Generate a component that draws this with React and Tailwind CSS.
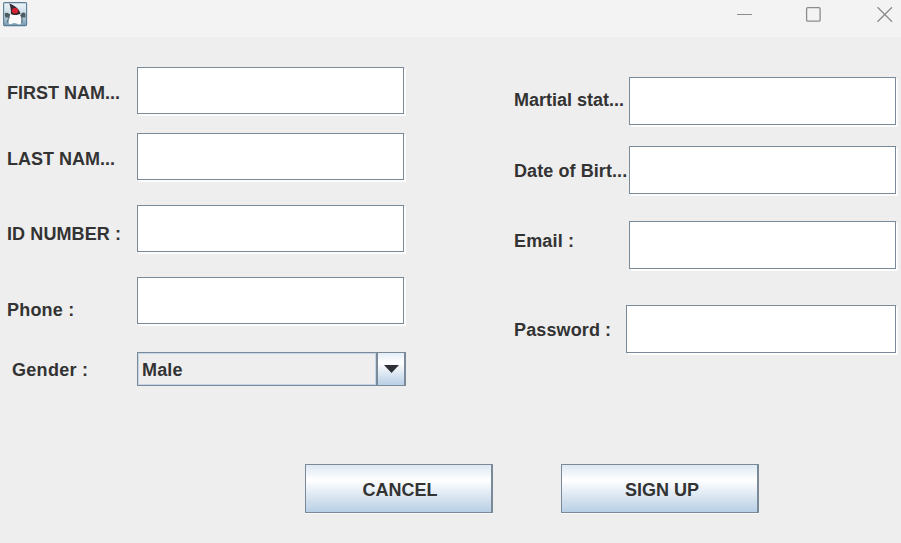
import React from "react";

function DukeIcon() {
  return (
    <svg width="25" height="25" viewBox="0 0 25 25">
      <defs>
        <linearGradient id="sky" x1="0" y1="0" x2="0" y2="1">
          <stop offset="0" stopColor="#edf4f8" />
          <stop offset="0.5" stopColor="#cbdbe5" />
          <stop offset="1" stopColor="#7799b3" />
        </linearGradient>
        <filter id="soft" x="-10%" y="-10%" width="120%" height="120%">
          <feGaussianBlur stdDeviation="0.45" />
        </filter>
      </defs>
      <rect x="0.6" y="0.6" width="23" height="23" rx="1.2" fill="url(#sky)" stroke="#597d92" strokeWidth="1.1" />
      <g filter="url(#soft)">
        <path d="M1.500 12c1-2 3-1.500 5 0l2 0-1 3.500-5 0zM22.500 11.500c-1.500-1.500-3-1-4 0l-1 1 1 3 4 0z" fill="#4c5b64" />
        <path d="M7.500 11.500c-1 3-2.200 8-1.500 10.200 1.500 1.500 3.500-.7 5.500-.7s4 2 6 1.300c1.500-2 .5-7.500-.5-11z" fill="#fbfbfb" />
        <path d="M6.200 1.500C9 2.500 15.500 5 17.500 11.500c-2 1.800-7 2-9.500.5C8 8 7.500 4 6.200 1.500z" fill="#332c30" />
        <ellipse cx="12" cy="8.800" rx="3.100" ry="2.700" fill="#dc2430" />
        <path d="M17.500 13c1.500 2 1.800 5 1.300 8M6.500 15c-1 1.500-2 3.500-2 5.500" fill="none" stroke="#4d5b64" strokeWidth="0.900" />
      </g>
    </svg>
  );
}

function TitleBar() {
  return (
    <header className="flex h-[37px] items-start justify-between bg-[#f3f3f3]">
      <div className="pt-[2px] pl-[3px]">
        <DukeIcon />
      </div>
      <div className="flex pt-[7px] pr-[8px] text-[#8c8c8c]">
        <svg width="16" height="16" viewBox="0 0 16 16" fill="none" stroke="currentColor" className="mr-[52px]">
          <path d="M0 7.500h15" />
        </svg>
        <svg width="16" height="16" viewBox="0 0 16 16" fill="none" stroke="currentColor" strokeWidth="1.300" className="mr-[56px]">
          <rect x="1.600" y="0.700" width="13.500" height="13.500" rx="1" />
        </svg>
        <svg width="16" height="16" viewBox="0 0 16 16" fill="none" stroke="currentColor" strokeWidth="1.300">
          <path d="M0.500 0.200l14.500 14.500M15 0.200l-14.500 14.500" />
        </svg>
      </div>
    </header>
  );
}

// Sunken Swing text field: grey frame with a white highlight below and to the right.
function TextField({ className }) {
  return (
    <div className={`shrink-0 border-r-[3px] border-b-2 border-transparent ${className}`}>
      <input
        type="text"
        className="block h-full w-full border border-[#7a8a99] bg-white shadow-[2px_2px_0_#fcfcfc] outline-none"
      />
    </div>
  );
}

function Row({ label, rowClass, labelClass, children }) {
  return (
    <div className={`flex items-start ${rowClass}`}>
      <label className={`shrink-0 leading-5 whitespace-nowrap ${labelClass}`}>{label}</label>
      {children}
    </div>
  );
}

function GenderSelect() {
  return (
    <div className="flex h-[34px] w-[269px] border border-[#7a8a99]">
      <div className="flex-1 border border-[#c3d5e6] pt-[6px] pl-[3px] leading-5 tracking-[0.15px]">Male</div>
      <div className="flex w-[29px] items-center justify-center border-r border-l-2 border-[#7a8a99] bg-linear-to-b from-[#e3edf6] via-white via-30% to-[#b8cfe5]">
        <svg width="15" height="8" viewBox="0 0 15 8" fill="#2c3034">
          <path d="M0 0h15L7.500 8z" />
        </svg>
      </div>
    </div>
  );
}

function Button({ children, className }) {
  return (
    <button
      className={`h-[49px] border border-r-2 border-[#7a8a99] bg-linear-to-b from-[#dde8f3] via-white via-32% to-[#b8cfe5] pt-[2px] leading-5 shadow-[0_1px_0_#f8f8f8] ${className}`}
    >
      {children}
    </button>
  );
}

export default function App() {
  return (
    <div className="flex h-[543px] w-[901px] flex-col overflow-hidden bg-[#eeeeee] font-['Liberation_Sans',Arial,sans-serif] text-[18px] font-bold text-[#333333]">
      <TitleBar />
      <main className="flex h-[427px] shrink-0">
        <section className="w-[507px] pt-[30px]">
          <Row label="FIRST NAM..." rowClass="h-[66px]" labelClass="w-[137px] pt-[16px] pl-[7px]">
            <TextField className="h-[49px] w-[270px]" />
          </Row>
          <Row label="LAST NAM..." rowClass="h-[72px]" labelClass="w-[137px] pt-[16px] pl-[7px]">
            <TextField className="h-[49px] w-[270px]" />
          </Row>
          <Row label="ID NUMBER :" rowClass="h-[72px]" labelClass="w-[137px] pt-[19px] pl-[7px] tracking-[0.1px]">
            <TextField className="h-[49px] w-[270px]" />
          </Row>
          <Row label="Phone :" rowClass="h-[75px]" labelClass="w-[137px] pt-[23px] pl-[7px] tracking-[0.2px]">
            <TextField className="h-[49px] w-[270px]" />
          </Row>
          <Row label="Gender :" rowClass="h-[34px]" labelClass="w-[137px] pt-[8px] pl-[12px] tracking-[0.3px]">
            <GenderSelect />
          </Row>
        </section>
        <section className="w-[394px] pt-[40px]">
          <Row label="Martial stat..." rowClass="h-[69px]" labelClass="w-[122px] pt-[13px] pl-[7px]">
            <TextField className="h-[50px] w-[270px]" />
          </Row>
          <Row label="Date of Birt..." rowClass="h-[75px]" labelClass="w-[122px] pt-[15px] pl-[7px] tracking-[0.08px]">
            <TextField className="h-[50px] w-[270px]" />
          </Row>
          <Row label="Email :" rowClass="h-[84px]" labelClass="w-[122px] pt-[10px] pl-[7px] tracking-[0.18px]">
            <TextField className="h-[50px] w-[270px]" />
          </Row>
          <Row label="Password :" rowClass="h-[50px]" labelClass="w-[119px] pt-[15px] pl-[7px] tracking-[0.12px]">
            <TextField className="h-[50px] w-[273px]" />
          </Row>
        </section>
      </main>
      <footer className="flex items-start gap-[68px] pl-[305px]">
        <Button className="w-[188px] pl-[3px]">CANCEL</Button>
        <Button className="w-[198px] pl-[5px]">SIGN UP</Button>
      </footer>
    </div>
  );
}
